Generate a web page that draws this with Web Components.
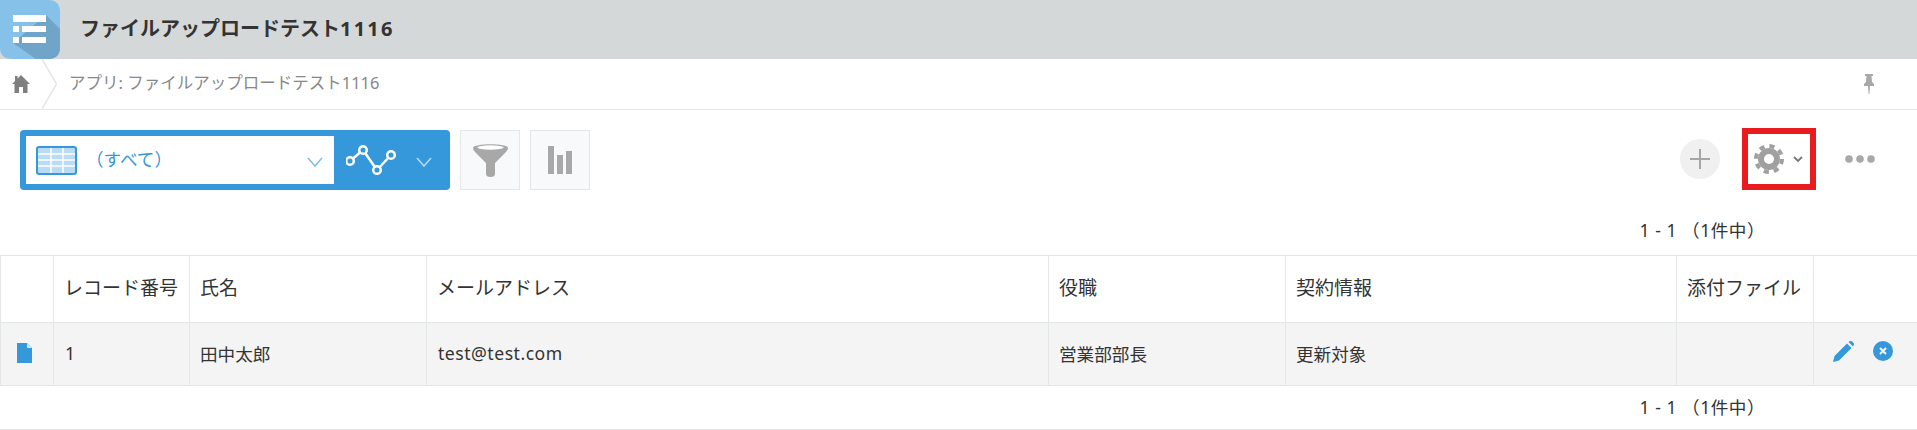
<!DOCTYPE html>
<html lang="ja">
<head>
<meta charset="utf-8">
<title>ファイルアップロードテスト1116</title>
<style>
  html, body { margin: 0; background: #fff; }
  body {
    width: 1917px;
    height: 430px;
    overflow: hidden;
    font-family: "Noto Sans", "Noto Sans CJK JP", sans-serif;
    color: #333;
  }
  kn-app-header b { font-weight: 700; }
</style>
</head>
<body>
<kn-app-header>ファイルアップロードテスト<b style="letter-spacing:2.2px">1116</b></kn-app-header>
<kn-breadcrumb>アプリ: ファイルアップロードテスト1116</kn-breadcrumb>
<kn-view-bar view-name="（すべて）"></kn-view-bar>
<kn-pager style="height:65px;--pager-top:15px">1 - 1 （1件中）</kn-pager>
<kn-record-table></kn-record-table>
<kn-pager style="height:44px;--pager-bottom:3px;--pager-line:#e3e7e8">1 - 1 （1件中）</kn-pager>

<script>
/**
 * kn-app-header - grey bar with the app icon and the app name (slot).
 */
class KnAppHeader extends HTMLElement {
  constructor() {
    super();
    this.attachShadow({ mode: 'open' });
    this.shadowRoot.innerHTML = `
      <style>
        :host {
          display: flex;
          align-items: center;
          height: 59px;
          background: #d4d8d9;
        }
        svg { display: block; flex: none; }
        .name {
          margin-left: 20px;
          font-size: 20px;
          font-weight: 700;
          color: #333;
          padding-bottom: 5px;
        }
      </style>
      <svg width="60" height="59" viewBox="0 0 60 59">
        <defs><clipPath id="c"><path d="M0 0H48Q60 0 60 12V47Q60 59 48 59H12Q0 59 0 47Z"/></clipPath></defs>
        <g clip-path="url(#c)">
          <rect width="60" height="59" fill="#85c1e9"/>
          <path d="M46 15L60 29V59H36L13 43Z" fill="#70a4c8"/>
          <path d="M13 15H46V22H13ZM13 26H19V32H13ZM22 26H46V32H22ZM13 37H19V43H13ZM22 37H46V43H22Z" fill="#fff"/>
        </g>
      </svg>
      <div class="name"><slot></slot></div>
    `;
  }
}

/**
 * kn-breadcrumb - home icon, chevron divider, path text (slot) and the pin.
 */
class KnBreadcrumb extends HTMLElement {
  constructor() {
    super();
    this.attachShadow({ mode: 'open' });
    this.shadowRoot.innerHTML = `
      <style>
        :host {
          display: flex;
          align-items: center;
          height: 50px;
          border-bottom: 1px solid #e3e7e8;
          background: #fff;
          font-size: 16.5px;
          color: #888;
        }
        svg { display: block; flex: none; }
        .home { margin-left: 12px; }
        .sep { margin-left: 12px; }
        .path { margin-left: 12px; flex: 1; padding-bottom: 5px; }
        .pin { margin-right: 43px; }
      </style>
      <svg class="home" width="18" height="18" viewBox="0 0 18 18">
        <path d="M9 0L18 9H15.5V18H11V12H7V18H2.5V9H0L3 6V1H5.500V3.500Z" fill="#7f7f7f"/>
      </svg>
      <svg class="sep" width="15" height="50" viewBox="0 0 15 50">
        <path d="M0 0L14.500 25L0 50" fill="none" stroke="#e3e7e8" stroke-width="1.500"/>
      </svg>
      <div class="path"><slot></slot></div>
      <svg class="pin" width="10" height="20" viewBox="0 0 10 20">
        <path d="M1 0H9V2H7.500L8 8L10 10V12H6L5.400 20H4.600L4 12H0V10L2 8L2.500 2H1Z" fill="#a8a8a8"/>
      </svg>
    `;
  }
}

/**
 * kn-view-bar - view picker, graph picker, filter and chart on the left,
 * add / settings / more on the right.
 */
class KnViewBar extends HTMLElement {
  constructor() {
    super();
    this.attachShadow({ mode: 'open' });
  }

  connectedCallback() {
    var viewName = this.getAttribute('view-name') || '';
    this.shadowRoot.innerHTML = `
      <style>
        :host {
          display: flex;
          align-items: flex-end;
          height: 62px;
          margin-top: 18px;
          padding: 0 42px 0 20px;
        }
        svg { display: block; flex: none; }
        .picker {
          display: flex;
          align-items: center;
          width: 430px;
          height: 60px;
          box-sizing: border-box;
          padding: 6px 0 6px 6px;
          background: #3498db;
          border-radius: 4px;
        }
        .view {
          display: flex;
          align-items: center;
          width: 308px;
          height: 48px;
          background: #fff;
          color: #3498db;
          font-size: 17.6px;
        }
        .view .table-icon { margin-left: 10px; }
        .view .label { margin-left: 9px; flex: 1; padding-bottom: 3px; }
        .view .chev { margin: 4px 11px 0 0; }
        .graph { margin-left: 12px; }
        .graph-chev { margin: 4px 0 0 20px; }
        .tool {
          display: flex;
          align-items: center;
          justify-content: center;
          width: 60px;
          height: 60px;
          box-sizing: border-box;
          margin-left: 10px;
          background: #f7f9fa;
          border: 1px solid #e3e7e8;
        }
        .right {
          display: flex;
          align-items: center;
          margin-left: auto;
          height: 62px;
        }
        .add {
          width: 40px;
          height: 40px;
          border-radius: 50%;
          background: #f0f0f0;
          display: flex;
          align-items: center;
          justify-content: center;
        }
        .settings {
          display: flex;
          align-items: center;
          width: 74px;
          height: 62px;
          box-sizing: border-box;
          margin-left: 22px;
          padding-left: 6px;
          border: 6px solid #e81c1f;
        }
        .settings .mini { margin-left: 9px; }
        .more { margin-left: 29px; }
      </style>
      <div class="picker">
        <div class="view">
          <svg class="table-icon" width="41" height="29" viewBox="0 0 41 29">
            <rect x="1" y="1" width="39" height="27" rx="2" fill="#b9dbf4" stroke="#3498db" stroke-width="2"/>
            <path d="M2 8H39M2 14H39M2 20H39M15 2V27M27 2V27" stroke="#fff" stroke-width="1.500" fill="none"/>
          </svg>
          <div class="label">${viewName}</div>
          <svg class="chev" width="16" height="10" viewBox="0 0 16 10">
            <path d="M1 1L8 9L15 1" fill="none" stroke="#7cbce8" stroke-width="1.500"/>
          </svg>
        </div>
        <svg class="graph" width="50" height="30" viewBox="0 0 50 30">
          <path d="M4 16L17 5M17 5L31 25M31 25L45 10" stroke="#fff" stroke-width="2.500" fill="none"/>
          <circle cx="4" cy="16" r="3.800" fill="#3498db" stroke="#fff" stroke-width="2.500"/>
          <circle cx="17" cy="5" r="3.800" fill="#3498db" stroke="#fff" stroke-width="2.500"/>
          <circle cx="31" cy="25" r="3.800" fill="#3498db" stroke="#fff" stroke-width="2.500"/>
          <circle cx="45" cy="10" r="3.800" fill="#3498db" stroke="#fff" stroke-width="2.500"/>
        </svg>
        <svg class="graph-chev" width="16" height="10" viewBox="0 0 16 10">
          <path d="M1 1L8 9L15 1" fill="none" stroke="#b5dbf3" stroke-width="1.500"/>
        </svg>
      </div>
      <div class="tool">
        <svg width="35" height="34" viewBox="0 0 35 34">
          <path d="M0 5C0 0 35 0 35 5C35 7 33 9 31 11L22 20V31Q22 34 17.500 34Q13 34 13 31V20L4 11C2 9 0 7 0 5Z" fill="#a8a8a8"/>
          <ellipse cx="17.500" cy="4.500" rx="13" ry="2.200" fill="#fff"/>
        </svg>
      </div>
      <div class="tool">
        <svg width="24" height="28" viewBox="0 0 24 28">
          <path d="M0 0H6V28H0ZM9 9H15V28H9ZM18 5H24V28H18Z" fill="#a8a8a8"/>
        </svg>
      </div>
      <div class="right">
        <div class="add">
          <svg width="20" height="20" viewBox="0 0 20 20">
            <path d="M10 0V20M0 10H20" stroke="#a5a5a5" stroke-width="2"/>
          </svg>
        </div>
        <div class="settings">
          <svg width="30" height="30" viewBox="0 0 30 30">
            <circle cx="15" cy="15" r="8" fill="none" stroke="#a0a0a0" stroke-width="6"/>
            <circle cx="15" cy="15" r="13" fill="none" stroke="#a0a0a0" stroke-width="4" stroke-dasharray="5.200 5.010"/>
          </svg>
          <svg class="mini" width="10" height="7" viewBox="0 0 10 7">
            <path d="M1 1L5 5L9 1" fill="none" stroke="#777" stroke-width="1.800"/>
          </svg>
        </div>
        <svg class="more" width="30" height="8" viewBox="0 0 30 8">
          <circle cx="4" cy="4" r="3.800" fill="#a8a8a8"/>
          <circle cx="15" cy="4" r="3.800" fill="#a8a8a8"/>
          <circle cx="26" cy="4" r="3.800" fill="#a8a8a8"/>
        </svg>
      </div>
    `;
  }
}

/**
 * kn-pager - record count, right aligned to the table's last columns.
 */
class KnPager extends HTMLElement {
  constructor() {
    super();
    this.attachShadow({ mode: 'open' });
    this.shadowRoot.innerHTML = `
      <style>
        :host {
          display: flex;
          justify-content: flex-end;
          align-items: center;
          box-sizing: border-box;
          padding-right: 152px;
          padding-top: var(--pager-top, 0px);
          padding-bottom: var(--pager-bottom, 0px);
          border-bottom: 1px solid var(--pager-line, transparent);
          font-size: 17.6px;
          letter-spacing: 0.5px;
          color: #333;
        }
      </style>
      <slot></slot>
    `;
  }
}

/**
 * kn-record-table - record list. Columns and rows come from the arrays below.
 */
class KnRecordTable extends HTMLElement {
  constructor() {
    super();
    this.attachShadow({ mode: 'open' });
    this._columns = [
      { width: 53, label: '' },
      { width: 136, label: 'レコード番号' },
      { width: 237, label: '氏名' },
      { width: 622, label: 'メールアドレス' },
      { width: 237, label: '役職' },
      { width: 391, label: '契約情報' },
      { width: 137, label: '添付ファイル' },
      { width: 104, label: '' },
    ];
    this._rows = [
      ['1', '田中太郎', 'test@test.com', '営業部部長', '更新対象', ''],
    ];
  }

  connectedCallback() {
    this.render();
  }

  render() {
    var cols = this._columns.map((c) => `<col style="width:${c.width}px">`).join('');
    var heads = this._columns.map((c) => `<th>${c.label}</th>`).join('');
    var rows = this._rows.map((row) => `
      <tr>
        <td class="icon-cell">
          <svg width="15" height="20" viewBox="0 0 15 20">
            <path d="M0 0H10L15 5V20H0Z" fill="#3498db"/>
            <path d="M10 0L15 5H10Z" fill="#cfe6f6"/>
          </svg>
        </td>
        ${row.map((v) => `<td>${/^[\x00-\x7f]+$/.test(v) ? `<span class="latin">${v}</span>` : v}</td>`).join('')}
        <td class="actions">
          <div>
            <svg width="21" height="21" viewBox="0 0 21 21">
              <path d="M0 21L1.500 15L14 2.500L18.500 7L6 19.500ZM15.500 1L17 0Q18 -0.500 19 0.500L20.500 2Q21.500 3 20.500 4.500L20 5.500Z" fill="#3498db"/>
            </svg>
            <svg width="20" height="20" viewBox="0 0 20 20">
              <circle cx="10" cy="10" r="10" fill="#3498db"/>
              <path d="M7 7L13 13M13 7L7 13" stroke="#fff" stroke-width="1.800"/>
            </svg>
          </div>
        </td>
      </tr>
    `).join('');

    this.shadowRoot.innerHTML = `
      <style>
        :host {
          display: block;
          color: #333;
        }
        table {
          width: 1917px;
          table-layout: fixed;
          border-collapse: collapse;
        }
        th, td {
          border: 1px solid #e3e7e8;
          padding: 0 10px;
          text-align: left;
          font-weight: 400;
          white-space: nowrap;
        }
        th:last-child, td:last-child { border-right: none; }
        thead tr { height: 67px; }
        tbody tr { height: 63px; background: #f4f4f4; }
        th { font-size: 19px; padding-bottom: 4px; }
        td { font-size: 17.6px; padding-bottom: 2px; }
        .latin { margin-left: 1px; letter-spacing: 0.5px; }
        .icon-cell svg { display: block; margin-left: 6px; }
        .actions div { display: flex; align-items: center; gap: 19px; margin: -4px 0 0 9px; }
        svg { display: block; flex: none; }
      </style>
      <table>
        <colgroup>${cols}</colgroup>
        <thead><tr>${heads}</tr></thead>
        <tbody>${rows}</tbody>
      </table>
    `;
  }
}

customElements.define('kn-app-header', KnAppHeader);
customElements.define('kn-breadcrumb', KnBreadcrumb);
customElements.define('kn-view-bar', KnViewBar);
customElements.define('kn-pager', KnPager);
customElements.define('kn-record-table', KnRecordTable);
</script>
</body>
</html>
